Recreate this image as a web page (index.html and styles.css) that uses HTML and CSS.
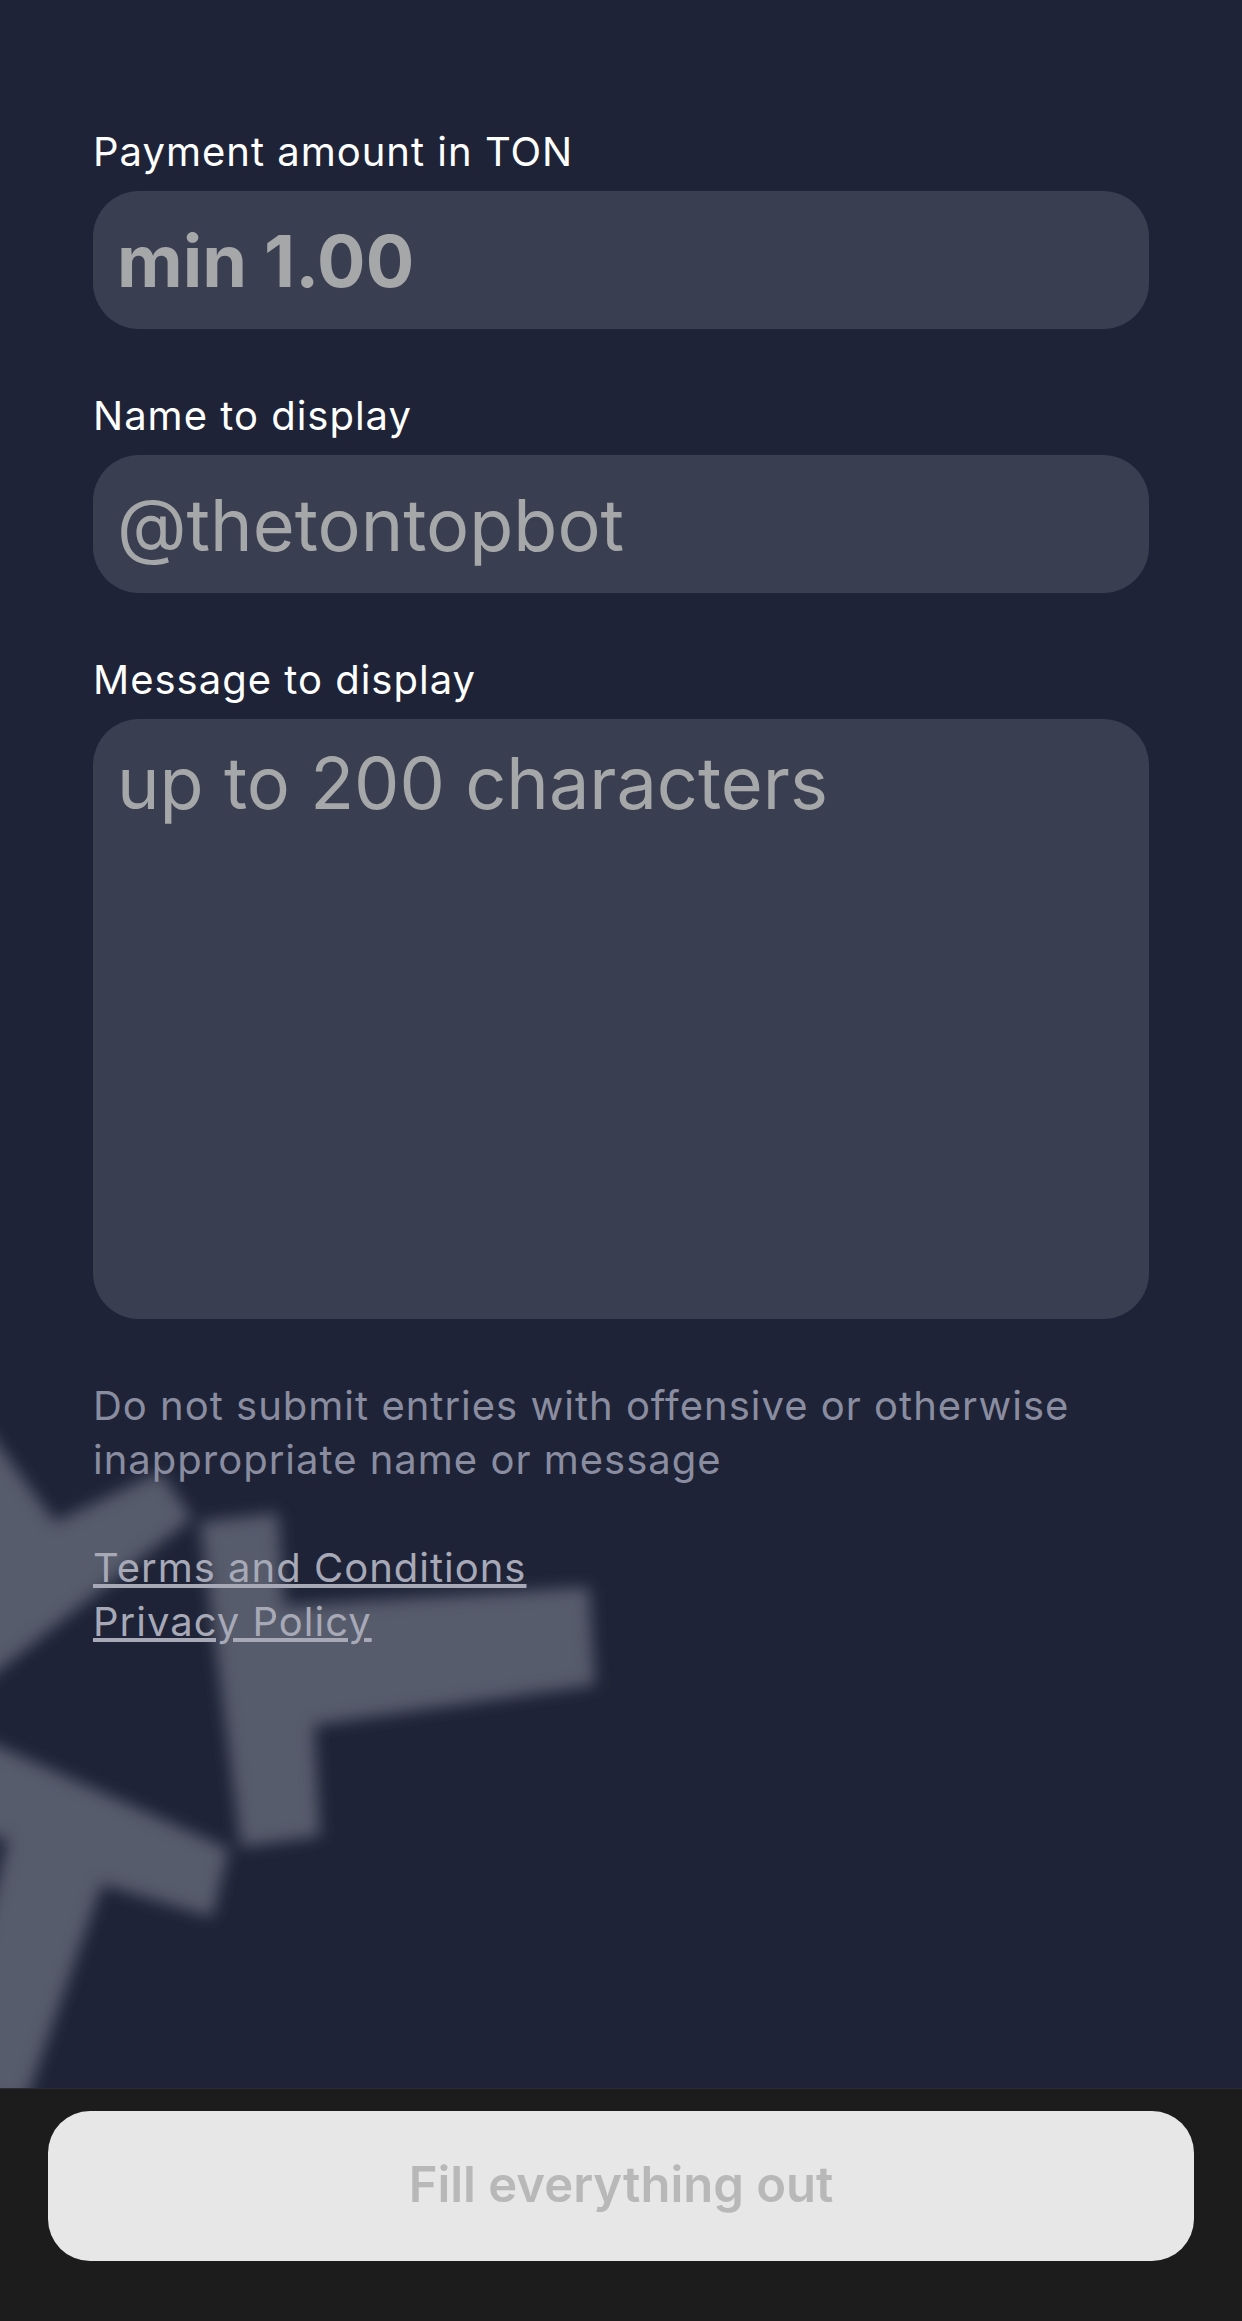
FILE: index.html
```html
<!doctype HTML>
<html>
<head>
  <link rel="stylesheet" href="styles.css">
</head>
<body>
  <div class="page">
    <svg class="stars" width="1242" height="2088" viewBox="0 0 1242 2088">
      <defs>
        <filter id="soft" x="-20%" y="-20%" width="140%" height="140%">
          <feGaussianBlur stdDeviation="8"/>
        </filter>
      </defs>
      <g filter="url(#soft)" fill="#575b6c">
        <polygon points="-20,1420 55,1522 160,1472 192,1518 -20,1685"/>
        <polygon points="200,1522 278,1513 284,1606 589,1587 595,1685 314,1725 320,1836 241,1847"/>
        <polygon points="-20,1738 229,1849 212,1917 102,1884 26,2100 -60,2100 8,1840 -20,1832"/>
      </g>
    </svg>
    <form class="form">
      <label class="label">Payment amount in TON</label>
      <div class="field field-bold">min 1.00</div>
      <label class="label">Name to display</label>
      <div class="field">@thetontopbot</div>
      <label class="label">Message to display</label>
      <div class="field field-area">up to 200 characters</div>
      <p class="note">Do not submit entries with offensive or otherwise inappropriate name or message</p>
      <div class="links">
        <a href="#">Terms and Conditions</a>
        <a href="#">Privacy Policy</a>
      </div>
    </form>
  </div>
  <div class="footer">
    <button class="submit" type="button">Fill everything out</button>
  </div>
</body>
</html>
```

FILE: styles.css
```css
* {
  box-sizing: border-box;
}
body {
  margin: 0;
  background: #1c1c1c;
  font-family: Inter, "Liberation Sans", sans-serif;
}
.page {
  position: relative;
  height: 2088px;
  overflow: hidden;
  background: #1e2337;
}
.stars {
  position: absolute;
  top: 0;
  left: 0;
}
.form {
  position: relative;
  display: flex;
  flex-direction: column;
  padding: 124px 93px 0;
}
.label {
  height: 54px;
  margin-bottom: 13px;
  font-size: 40px;
  line-height: 56px;
  letter-spacing: 1px;
  color: #fff;
}
.field {
  height: 138px;
  margin-bottom: 59px;
  padding: 0 24px;
  border-radius: 46px;
  background: #393e50;
  color: #a6a7a9;
  font-size: 72px;
  line-height: 140px;
}
.field-bold {
  font-weight: 700;
}
.field-area {
  height: 600px;
  margin-bottom: 60px;
  line-height: 128px;
}
.note {
  margin: 0 0 54px;
  font-size: 40px;
  line-height: 54px;
  letter-spacing: 1px;
  color: #8a8da0;
}
.links {
  display: flex;
  flex-direction: column;
  align-items: flex-start;
  font-size: 40px;
  line-height: 54px;
  letter-spacing: 1px;
}
.links a {
  color: #a7a9b7;
}
.footer {
  height: 233px;
  padding: 22px 48px 0;
  border-top: 1px solid #2c2d30;
  background: #1c1c1c;
}
.submit {
  display: block;
  width: 100%;
  height: 150px;
  padding: 0 0 3px;
  border: 0;
  border-radius: 42px;
  background: #e8e7e8;
  color: #b9b8b9;
  font-family: inherit;
  font-size: 49px;
  font-weight: 600;
}
```
